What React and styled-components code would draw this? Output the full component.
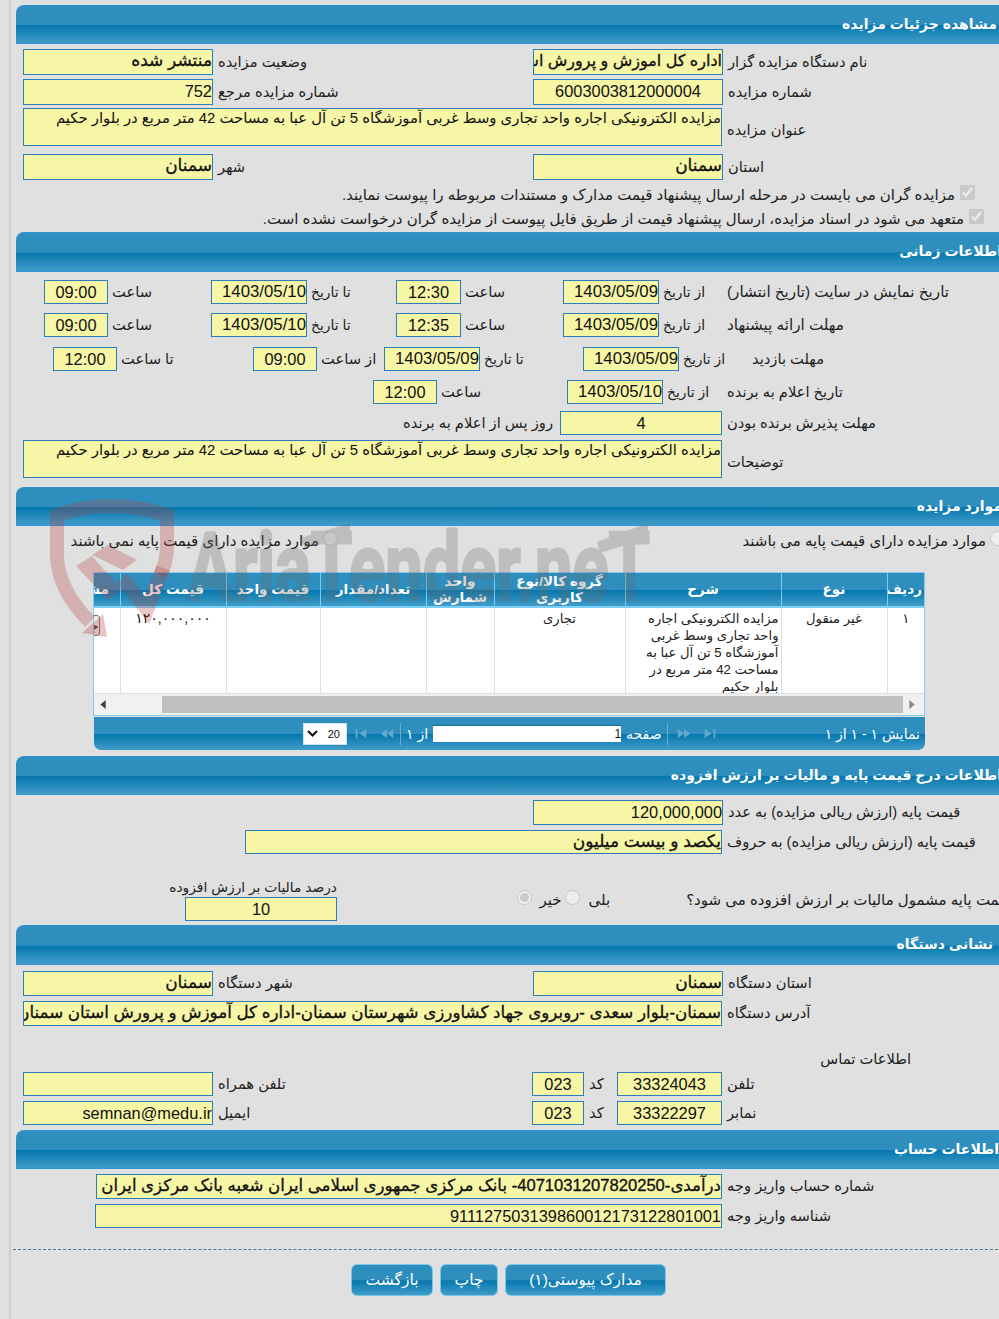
import React from 'react';
import styled, { createGlobalStyle } from 'styled-components';

const Global = createGlobalStyle`
  html, body { margin: 0; padding: 0; background: #e0e0e0; }
  body { width: 999px; height: 1319px; overflow: hidden; font-family: "Liberation Sans", "DejaVu Sans", sans-serif; color: #111; }
  * { box-sizing: border-box; }
`;

const gradient = `linear-gradient(to bottom, #2e8fbf 0, #2e8fbf 51%, #0677ae 52%, #409cc8 100%)`;

const Page = styled.div`
  position: relative;
  width: 999px;
  height: 1319px;
  overflow: hidden;
  padding: 5px 0 0 16px;
  &::before {
    content: "";
    position: absolute;
    left: 9px;
    top: 0;
    bottom: 0;
    width: 2px;
    background: #cfcfcf;
  }
`;
const Inner = styled.div`
  width: 1010px;
`;
const Bar = styled.div`
  height: ${p => p.$h || 39}px;
  margin-top: ${p => p.$mt || 0}px;
  background: ${gradient};
  border-top: 1px solid #2f94cf;
  border-bottom: 1px solid #2f94d8;
  border-radius: 8px 8px 0 0;
  color: #fff;
  font-size: 14px;
  font-weight: bold;
  direction: rtl;
  line-height: 36px;
  padding-right: ${p => p.$pr || 24}px;
  white-space: nowrap;
`;
const Two = styled.div`
  display: grid;
  grid-template-columns: 510px 1fr;
  padding-left: 7px;
  margin-top: ${p => p.$mt || 0}px;
  height: ${p => p.$h || 24}px;
`;
const Pair = styled.div`
  display: flex;
  align-items: stretch;
  gap: 5px;
  margin-left: ${p => p.$ml || 0}px;
`;
const Wide = styled.div`
  display: flex;
  align-items: stretch;
  gap: 5px;
  padding-left: ${p => p.$left || 7}px;
  margin-top: ${p => p.$mt || 0}px;
  height: ${p => p.$h || 24}px;
`;
const Field = styled.div`
  flex: none;
  width: ${p => p.$w || 190}px;
  height: ${p => p.$fh ? `${p.$fh}px` : 'auto'};
  border: 1px solid #2a7fb8;
  background: #f7f5a6;
  direction: ${p => p.$ltr ? 'ltr' : 'rtl'};
  text-align: ${p => p.$center ? 'center' : 'right'};
  font-size: ${p => p.$size || (p.$strong ? 17 : 16.4)}px;
  line-height: ${p => p.$tall ? '18px' : '22px'};
  -webkit-text-stroke: ${p => p.$strong ? '0.3px #111' : '0'};
  white-space: nowrap;
  overflow: hidden;
  color: #111;
`;
const DateField = styled(Field).attrs({ $w: 96, $size: 16.8 })``;
const Label = styled.div`
  direction: rtl;
  text-align: left;
  white-space: nowrap;
  flex: ${p => p.$w ? 'none' : '0 1 auto'};
  width: ${p => p.$w ? `${p.$w}px` : 'auto'};
  font-size: ${p => p.$size || 14.7}px;
  line-height: ${p => p.$lh || 24}px;
  color: #222;
  align-self: ${p => p.$mid ? 'center' : 'auto'};
  margin-top: ${p => p.$mid ? 6 : 0}px;
  margin-left: ${p => p.$ml || 0}px;
`;
const DateLabel = styled(Label).attrs({ $size: 13.9 })``;
const CheckLine = styled.div`
  direction: rtl;
  height: ${p => p.$h || 23}px;
  padding-right: ${p => p.$pr}px;
  font-size: 15px;
  display: flex;
  align-items: center;
  gap: 5px;
  white-space: nowrap;
  color: #222;
  margin-top: ${p => p.$mt || 0}px;
  input { margin: 0 0 6px; width: 15px; height: 15px; flex: none; }
`;
const TimeRow = styled.div`
  display: flex;
  height: 24px;
  padding-left: ${p => p.$left}px;
  margin-top: ${p => p.$mt || 0}px;
`;
const Cell = styled.div`
  flex: none;
  width: ${p => p.$w}px;
  display: flex;
  gap: ${p => p.$gap ?? 4}px;
`;
const Note = styled.div`
  direction: rtl;
  font-size: ${p => p.$size || 14.7}px;
  white-space: nowrap;
  line-height: ${p => p.$lh || 24}px;
  color: #222;
  margin: ${p => p.$m || 0};
`;
const Choice = styled.label`
  direction: rtl;
  display: flex;
  align-items: center;
  gap: 4px;
  padding-right: ${p => p.$pr || 0}px;
  font-size: 15px;
  color: #222;
  white-space: nowrap;
  input { margin: 0 0 6px; width: 15px; height: 15px; flex: none; }
`;
const TaxRow = styled.div`
  display: grid;
  grid-template-columns: 328px 1fr;
  height: 42px;
  margin-top: 25px;
  padding-left: 169px;
`;
const TaxCol = styled.div`
  width: 152px;
`;
const TaxQuestion = styled(Choice)`
  height: 24px;
  margin-top: 9px;
  gap: 0;
  padding-right: 15px;
`;
const TaxOption = styled.span`
  display: inline-flex;
  align-items: center;
  gap: ${p => p.$gap}px;
  margin-right: ${p => p.$mr}px;
`;
const TableBox = styled.div`
  margin: 19px 0 0 77px;
  width: 832px;
  border: 1px solid #8cc8ea;
  background: #fff;
`;
const Clip = styled.div`
  direction: rtl;
  overflow: hidden;
  height: 121px;
`;
const Grid = styled.table`
  table-layout: fixed;
  border-collapse: collapse;
  width: 930px;
`;
const Col = styled.col`
  width: ${p => p.$w}px;
`;
const Th = styled.th`
  height: 34px;
  background: ${gradient};
  color: #fff;
  font-size: 13.6px;
  line-height: 16px;
  font-weight: bold;
  border-left: 1px solid #7ccbef;
  border-bottom: 2px solid #7cd0f5;
  padding: 0 2px;
  text-align: center;
  overflow: hidden;
  white-space: ${p => p.$wrap ? 'normal' : 'nowrap'};
`;
const Td = styled.td`
  vertical-align: top;
  padding: 0;
  border-left: 1px solid #dfdfdf;
  border-bottom: 1px solid #dfdfdf;
  font-size: 13.2px;
  line-height: 17px;
  color: #222;
  text-align: ${p => p.$right ? 'right' : 'center'};
`;
const TdInner = styled.div`
  height: 85px;
  overflow: hidden;
  padding: ${p => p.$right ? '2px 2px 0 3px' : '2px 2px 0'};
`;
const Price = styled.span`
  font-size: 14px;
  letter-spacing: 0.7px;
  color: #111;
`;
const RowButton = styled.button`
  display: block;
  margin: 5px 18px 0 0;
  width: 60px;
  height: 21px;
  border: 1px solid #777;
  border-radius: 3px;
  padding: 0;
  background: #efefef;
  direction: rtl;
  text-align: right;
  font: 15px "DejaVu Sans", sans-serif;
  color: #222;
`;
const Scroll = styled.div`
  height: 21px;
  background: #f1f1f1;
  display: flex;
  align-items: center;
  padding: 0 6px;
`;
const Thumb = styled.div`
  flex: none;
  width: 741px;
  height: 17px;
  margin: 0 6px 0 56px;
  background: #c0c0c0;
`;
const Pager = styled.div`
  margin: 1px 0 0 78px;
  width: 831px;
  height: 33px;
  border-radius: 0 0 7px 7px;
  background: ${gradient};
  display: flex;
  align-items: center;
  color: #fff;
  font-size: 14px;
  padding: 0 5px 0 209px;
  direction: ltr;
  white-space: nowrap;
`;
const Select = styled.div`
  width: 44px;
  height: 22px;
  background: #fff;
  border: 1px solid #cfe3ef;
  display: flex;
  align-items: center;
  justify-content: space-between;
  padding: 0 6px 0 3px;
  color: #111;
  font-size: 11px;
`;
const PagerIcons = styled.div`
  display: flex;
  gap: 12px;
  margin-left: ${p => p.$ml || 0}px;
`;
const PagerSep = styled.div`
  width: 1px;
  height: 22px;
  background: #6aaccf;
  margin: 0 ${p => p.$mr || 0}px 0 ${p => p.$ml || 0}px;
`;
const PageInput = styled.div`
  width: 188px;
  height: 17px;
  background: #fff;
  border-top: 1px solid #1b6a94;
  color: #111;
  text-align: right;
  font-size: 12px;
  line-height: 16px;
  margin: 0 5px;
`;
const PagerText = styled.div`
  direction: rtl;
  margin-left: ${p => p.$auto ? 'auto' : '0'};
`;
const Rule = styled.div`
  margin: 21px 0 0 -3px;
  width: 1000px;
  border-top: 1px dashed #3a80a8;
`;
const Buttons = styled.div`
  display: flex;
  gap: 7px;
  margin: 14px 0 0 335px;
`;
const Btn = styled.button`
  width: ${p => p.$w}px;
  height: 32px;
  border: 1px solid #79c6ea;
  border-radius: 6px;
  background: ${gradient};
  color: #fff;
  font: 15.5px "Liberation Sans", "DejaVu Sans", sans-serif;
  direction: rtl;
  padding: 0;
`;
const Mark = styled.svg`
  position: absolute;
  left: 0;
  top: 490px;
  pointer-events: none;
`;

const Check = () => <input type="checkbox" checked disabled readOnly />;
const Radio = ({ on }) => <input type="radio" checked={!!on} disabled readOnly />;

const title = 'مزایده الکترونیکی اجاره واحد تجاری وسط غربی آموزشگاه 5 تن آل عبا به مساحت 42 متر مربع در بلوار حکیم';

const First = () => <svg width="13" height="9" viewBox="0 0 13 10"><path d="M0 0h2v10H0zM4 5l8-5v10z" fill="#63a9cf" /></svg>;
const Prev = () => <svg width="14" height="9" viewBox="0 0 14 10"><path d="M0 5l7-5v10zM7 5l7-5v10z" fill="#63a9cf" /></svg>;
const Next = () => <svg width="14" height="9" viewBox="0 0 14 10"><path d="M14 5L7 0v10zM7 5L0 0v10z" fill="#63a9cf" /></svg>;
const Last = () => <svg width="13" height="9" viewBox="0 0 13 10"><path d="M13 0h-2v10h2zM9 5L1 0v10z" fill="#63a9cf" /></svg>;

const Watermark = () => (
  <Mark width="700" height="160" viewBox="0 490 700 160">
    <path d="M90 622 Q58 590 57 556 L57 515 Q110 497 167 515 L167 548 Q166 565 160 575" fill="none" stroke="#b83a3a" strokeOpacity=".28" strokeWidth="14" />
    <path d="M82 633 L107 637 L103 614z" fill="#b83a3a" fillOpacity=".3" />
    <path d="M76 566 L92 556 L122 590 L108 600z M92 555 L108 545 L137 560 L123 570z" fill="#b83a3a" fillOpacity=".28" />
    <path d="M122 578 L147 610 L163 568" fill="none" stroke="#b83a3a" strokeOpacity=".28" strokeWidth="14" />
    <g opacity=".28" fill="#6a6a6a">
      <path d="M300 538 L350 523 L350 536 L305 548z M597 542 L648 523 L648 538 L600 553z" />
      <text x="188" y="600" fontFamily="Roboto, sans-serif" fontWeight="700" fontSize="95" stroke="#6a6a6a" strokeWidth="3" textLength="462" lengthAdjust="spacingAndGlyphs">AriaTender.neT</text>
    </g>
  </Mark>
);

export default function App() {
  return (
    <Page>
      <Global />
      <Inner>
        <Bar $pr={29}>مشاهده جزئیات مزایده</Bar>
        <Two $mt={5} $h={25}>
          <Pair><Field $strong>منتشر شده</Field><Label $lh={26}>وضعیت مزایده</Label></Pair>
          <Pair><Field $strong $size={16}>اداره کل اموزش و پرورش استان سمنان</Field><Label $lh={26}>نام دستگاه مزایده گزار</Label></Pair>
        </Two>
        <Two $mt={5} $h={24}>
          <Pair><Field>752</Field><Label $lh={26}>شماره مزایده مرجع</Label></Pair>
          <Pair><Field $center>6003003812000004</Field><Label $lh={26}>شماره مزایده</Label></Pair>
        </Two>
        <Wide $mt={5} $h={38}>
          <Field $w={699} $tall $size={14.85}>{title}</Field>
          <Label $mid>عنوان مزایده</Label>
        </Wide>
        <Two $mt={8} $h={25}>
          <Pair><Field $strong>سمنان</Field><Label $lh={26}>شهر</Label></Pair>
          <Pair><Field $strong>سمنان</Field><Label $lh={26}>استان</Label></Pair>
        </Two>
        <CheckLine $pr={51} $mt={4} $h={24}><Check />مزایده گران می بایست در مرحله ارسال پیشنهاد قیمت مدارک و مستندات مربوطه را پیوست نمایند.</CheckLine>
        <CheckLine $pr={42} $h={24}><Check />متعهد می شود در اسناد مزایده، ارسال پیشنهاد قیمت از طریق فایل پیوست از مزایده گران درخواست نشده است.</CheckLine>

        <Bar $mt={1} $h={40}>اطلاعات زمانی</Bar>
        <TimeRow $left={28} $mt={8}>
          <Cell $w={167}><Field $w={64} $center>09:00</Field><Label>ساعت</Label></Cell>
          <Cell $w={185}><DateField>1403/05/10</DateField><DateLabel>تا تاریخ</DateLabel></Cell>
          <Cell $w={167}><Field $w={65} $center>12:30</Field><Label>ساعت</Label></Cell>
          <Cell $w={164}><DateField>1403/05/09</DateField><DateLabel>از تاریخ</DateLabel></Cell>
          <Label $size={15.2}>تاریخ نمایش در سایت (تاریخ انتشار)</Label>
        </TimeRow>
        <TimeRow $left={28} $mt={9}>
          <Cell $w={167}><Field $w={64} $center>09:00</Field><Label>ساعت</Label></Cell>
          <Cell $w={185}><DateField>1403/05/10</DateField><DateLabel>تا تاریخ</DateLabel></Cell>
          <Cell $w={167}><Field $w={65} $center>12:35</Field><Label>ساعت</Label></Cell>
          <Cell $w={164}><DateField>1403/05/09</DateField><DateLabel>از تاریخ</DateLabel></Cell>
          <Label $size={15.2}>مهلت ارائه پیشنهاد</Label>
        </TimeRow>
        <TimeRow $left={37} $mt={10}>
          <Cell $w={200}><Field $w={64} $center>12:00</Field><Label>تا ساعت</Label></Cell>
          <Cell $w={131}><Field $w={64} $center>09:00</Field><Label>از ساعت</Label></Cell>
          <Cell $w={199}><DateField>1403/05/09</DateField><DateLabel>تا تاریخ</DateLabel></Cell>
          <Cell $w={144}><DateField>1403/05/09</DateField><DateLabel>از تاریخ</DateLabel></Cell>
          <Label $ml={25}>مهلت بازدید</Label>
        </TimeRow>
        <TimeRow $left={357} $mt={9}>
          <Cell $w={194}><Field $w={64} $center>12:00</Field><Label>ساعت</Label></Cell>
          <Cell $w={160}><DateField>1403/05/10</DateField><DateLabel>از تاریخ</DateLabel></Cell>
          <Label>تاریخ اعلام به برنده</Label>
        </TimeRow>
        <TimeRow $left={387} $mt={7}>
          <Cell $w={157} $gap={0}><Note>روز پس از اعلام به برنده</Note></Cell>
          <Cell $w={167} $gap={5}><Field $w={162} $center>4</Field><Label>مهلت پذیرش برنده بودن</Label></Cell>
        </TimeRow>
        <Wide $mt={5} $h={38}>
          <Field $w={699} $tall $size={14.85}>{title}</Field>
          <Label $mid>توضیحات</Label>
        </Wide>

        <Bar $mt={9}>موارد مزایده</Bar>
        <Two $h={24} $mt={3}>
          <Choice $pr={195}><Radio />موارد مزایده دارای قیمت پایه نمی باشند</Choice>
          <Choice $pr={21}><Radio />موارد مزایده دارای قیمت پایه می باشند</Choice>
        </Two>
        <TableBox>
          <Clip>
            <Grid>
              <colgroup>
                <Col $w={37} /><Col $w={106} /><Col $w={156} /><Col $w={131} /><Col $w={68} /><Col $w={106} /><Col $w={94} /><Col $w={106} /><Col $w={126} />
              </colgroup>
              <thead>
                <tr>
                  <Th>ردیف</Th><Th>نوع</Th><Th>شرح</Th><Th $wrap>گروه کالا/نوع کاربری</Th><Th $wrap>واحد شمارش</Th><Th>تعداد/مقدار</Th><Th>قیمت واحد</Th><Th>قیمت کل</Th><Th>مشاهده جزئیات</Th>
                </tr>
              </thead>
              <tbody>
                <tr>
                  <Td><TdInner>۱</TdInner></Td>
                  <Td><TdInner>غیر منقول</TdInner></Td>
                  <Td $right><TdInner $right>{title}</TdInner></Td>
                  <Td><TdInner>تجاری</TdInner></Td>
                  <Td><TdInner /></Td>
                  <Td><TdInner /></Td>
                  <Td><TdInner /></Td>
                  <Td><TdInner><Price>۱۲۰,۰۰۰,۰۰۰</Price></TdInner></Td>
                  <Td><TdInner><RowButton>جزئیات</RowButton></TdInner></Td>
                </tr>
              </tbody>
            </Grid>
          </Clip>
          <Scroll>
            <svg width="6" height="9" viewBox="0 0 6 10"><path d="M6 0v10L0 5z" fill="#444" /></svg>
            <Thumb />
            <svg width="6" height="9" viewBox="0 0 6 10"><path d="M0 0v10l6-5z" fill="#888" /></svg>
          </Scroll>
        </TableBox>
        <Pager>
          <Select>
            <svg width="11" height="7" viewBox="0 0 11 7"><path d="M1 1l4.5 4.5L10 1" fill="none" stroke="#111" strokeWidth="2" /></svg>
            <span>20</span>
          </Select>
          <PagerIcons $ml={8}><First /><Prev /></PagerIcons>
          <PagerSep $ml={6} $mr={5} />
          <PagerText>از ۱</PagerText>
          <PageInput>1</PageInput>
          <PagerText>صفحه</PagerText>
          <PagerSep $ml={5} $mr={9} />
          <PagerIcons><Next /><Last /></PagerIcons>
          <PagerText $auto>نمایش ۱ - ۱ از ۱</PagerText>
        </Pager>

        <Bar $mt={6}>اطلاعات درج قیمت پایه و مالیات بر ارزش افزوده</Bar>
        <Two $mt={5} $h={25}>
          <div />
          <Pair><Field>120,000,000</Field><Label>قیمت پایه (ارزش ریالی مزایده) به عدد</Label></Pair>
        </Two>
        <Wide $mt={5} $h={24} $left={229}>
          <Field $w={477} $strong>یکصد و بیست میلیون</Field>
          <Label>قیمت پایه (ارزش ریالی مزایده) به حروف</Label>
        </Wide>
        <TaxRow>
          <TaxCol>
            <Note $lh={18} $size={13.8}>درصد مالیات بر ارزش افزوده</Note>
            <Field $w={152} $center $fh={24}>10</Field>
          </TaxCol>
          <TaxQuestion>
            قیمت پایه مشمول مالیات بر ارزش افزوده می شود؟
            <TaxOption $gap={9} $mr={76}>بلی <Radio /></TaxOption>
            <TaxOption $gap={7} $mr={3}>خیر <Radio on /></TaxOption>
          </TaxQuestion>
        </TaxRow>

        <Bar $mt={4} $h={40} $pr={33}>نشانی دستگاه</Bar>
        <Two $mt={6} $h={25}>
          <Pair><Field $strong>سمنان</Field><Label>شهر دستگاه</Label></Pair>
          <Pair><Field $strong>سمنان</Field><Label>استان دستگاه</Label></Pair>
        </Two>
        <Wide $mt={5} $h={25}>
          <Field $w={699} $strong $size={16.7}>سمنان-بلوار سعدی -روبروی جهاد کشاورزی شهرستان سمنان-اداره کل آموزش و پرورش استان سمنان</Field>
          <Label>آدرس دستگاه</Label>
        </Wide>
        <Note $lh={24} $m="21px 115px 0 0">اطلاعات تماس</Note>
        <Two $mt={1} $h={24}>
          <Pair><Field /><Label>تلفن همراه</Label></Pair>
          <Pair $ml={-1}><Field $w={52} $center>023</Field><Label $w={23}>کد</Label><Field $w={105} $center>33324043</Field><Label>تلفن</Label></Pair>
        </Two>
        <Two $mt={5} $h={24}>
          <Pair><Field $ltr>semnan@medu.ir</Field><Label>ایمیل</Label></Pair>
          <Pair $ml={-1}><Field $w={52} $center>023</Field><Label $w={23}>کد</Label><Field $w={105} $center>33322297</Field><Label>نمابر</Label></Pair>
        </Two>

        <Bar $mt={5} $pr={27}>اطلاعات حساب</Bar>
        <Wide $mt={5} $h={25} $left={80}>
          <Field $w={626} $strong $size={16.6}>درآمدی-4071031207820250- بانک مرکزی جمهوری اسلامی ایران شعبه بانک مرکزی ایران</Field>
          <Label>شماره حساب واریز وجه</Label>
        </Wide>
        <Wide $mt={5} $h={24} $left={79}>
          <Field $w={627}>911127503139860012173122801001</Field>
          <Label>شناسه واریز وجه</Label>
        </Wide>
        <Rule />
        <Buttons>
          <Btn $w={82}>بازگشت</Btn>
          <Btn $w={58}>چاپ</Btn>
          <Btn $w={161}>مدارک پیوستی(۱)</Btn>
        </Buttons>
      </Inner>
      <Watermark />
    </Page>
  );
}
